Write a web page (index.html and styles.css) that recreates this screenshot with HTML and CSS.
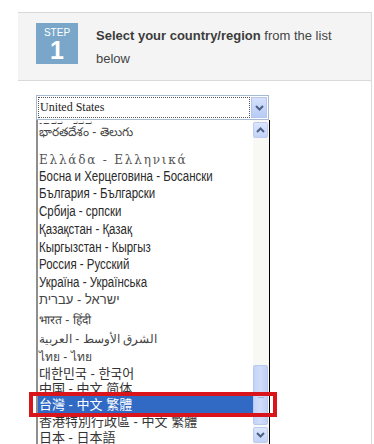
FILE: index.html
```html
<!DOCTYPE html>
<html>
<head>
<meta charset="utf-8">
<link rel="stylesheet" href="styles.css">
</head>
<body>
<div class="frame">
  <div class="header">
    <div class="badge"><span class="badge-step">STEP</span><span class="badge-num">1</span></div>
    <p class="title"><b>Select your country/region</b> from the list below</p>
  </div>
  <div class="content">
    <div class="select">
      <div class="select-value"><span>United States</span></div>
      <div class="select-btn">
        <svg width="9" height="6" viewBox="0 0 9 6"><path d="M1 1 L4.5 4.5 L8 1" fill="none" stroke="#4d6185" stroke-width="2"/></svg>
      </div>
    </div>
    <div class="list">
      <div class="items">
        <div class="row r-part"><span class="part">ಭಾರತ - ಕನ್ನಡ</span></div>
        <div class="row r-te small">భారతదేశం - తెలుగు</div>
        <div class="row r-el">Ελλάδα - Ελληνικά</div>
        <div class="row r16"><span class="cy">Босна и Херцеговина - Босански</span></div>
        <div class="row r17"><span class="cy">България - Български</span></div>
        <div class="row r19"><span class="cy">Србија - српски</span></div>
        <div class="row r18"><span class="cy">Қазақстан - Қазақ</span></div>
        <div class="row r17"><span class="cy">Кыргызстан - Кыргыз</span></div>
        <div class="row r18"><span class="cy">Россия - Русский</span></div>
        <div class="row r17"><span class="cy">Україна - Українська</span></div>
        <div class="row r19 rtl">ישראל - עברית</div>
        <div class="row r21 small">भारत - हिंदी</div>
        <div class="row r17 small">الشرق الأوسط - العربية</div>
        <div class="row r18 small">ไทย - ไทย</div>
        <div class="row r16 cjk">대한민국 - 한국어</div>
        <div class="row r15 cjk">中国 - 中文 简体</div>
        <div class="row r17 cjk selected">台灣 - 中文 繁體</div>
        <div class="row r16 cjk">香港特別行政區 - 中文 繁體</div>
        <div class="row r17 cjk">日本 - 日本語</div>
      </div>
      <div class="scrollbar">
        <div class="sb-btn">
          <svg width="9" height="6" viewBox="0 0 9 6"><path d="M1 5 L4.5 1.5 L8 5" fill="none" stroke="#4d6185" stroke-width="2"/></svg>
        </div>
        <div class="sb-track"></div>
        <div class="sb-thumb"><span class="grip"></span><span class="grip"></span><span class="grip"></span></div>
        <div class="sb-btn">
          <svg width="9" height="6" viewBox="0 0 9 6"><path d="M1 1 L4.5 4.5 L8 1" fill="none" stroke="#4d6185" stroke-width="2"/></svg>
        </div>
      </div>
    </div>
    <div class="highlight-box"></div>
  </div>
</div>
</body>
</html>
```

FILE: styles.css
```css
html, body {
  margin: 0;
  padding: 0;
  background: #ffffff;
  overflow: hidden;
  height: 444px;
}
.frame {
  margin: 12px 0 0 18px;
  width: 353px;
  height: 432px;
  border-top: 1px solid #d9d9d9;
  border-right: 1px solid #d9d9d9;
  font-family: "Liberation Sans", Arial, sans-serif;
}
.header {
  display: flex;
  align-items: flex-start;
  gap: 18px;
  height: 57px;
  padding: 10px 0 0 18px;
  background: #f4f4f4;
  border-bottom: 1px solid #d9d9d9;
}
.badge {
  width: 42px;
  height: 41px;
  background: #7aa7c9;
  color: #ffffff;
  display: flex;
  flex-direction: column;
  align-items: center;
  flex-shrink: 0;
}
.badge-step {
  font-size: 10px;
  line-height: 10px;
  margin-top: 5px;
}
.badge-num {
  font-size: 25px;
  font-weight: bold;
  line-height: 22px;
  margin-top: 1px;
}
.title {
  margin: 0;
  padding-top: 1px;
  width: 250px;
  font-size: 13px;
  line-height: 23px;
  color: #444444;
}
.title b {
  color: #3c3c3c;
}
.content {
  position: relative;
  padding: 14px 0 0 18px;
}
.select {
  width: 233px;
  height: 25px;
  box-sizing: border-box;
  border: 1px solid #a5b9d1;
  display: flex;
  background: #fff;
}
.select-value {
  flex: 1;
  margin: 1px;
  border: 1px dotted #555;
  font-family: "Liberation Serif", "Times New Roman", serif;
  font-size: 12px;
  color: #222;
  line-height: 19px;
  padding-left: 1px;
}
.select-btn {
  width: 16px;
  margin: 1px 1px 1px 0;
  background: linear-gradient(#d5e1fd, #b8cbf6);
  border: 1px solid #b4c6ee;
  box-sizing: border-box;
  display: flex;
  align-items: center;
  justify-content: center;
}
.list {
  width: 234px;
  height: 324px;
  box-sizing: border-box;
  border-left: 2px solid #8f8f8f;
  border-right: 1px solid #000;
  display: flex;
  overflow: hidden;
  background: #fff;
}
.items {
  flex: 1;
  overflow: hidden;
  font-family: "Liberation Sans", Arial, sans-serif;
  font-size: 14px;
  color: #2a2a2a;
}
.row {
  padding-left: 1px;
  white-space: nowrap;
  display: flex;
  align-items: center;
  box-sizing: border-box;
}
.r-part {
  height: 4px;
  overflow: hidden;
  align-items: flex-end;
  font-size: 11px;
  color: #444;
}
.part {
  line-height: 11px;
  margin-bottom: -6px;
}
.cy {
  display: inline-block;
  transform: scaleX(0.82);
  transform-origin: left center;
}
.r-te { height: 18px; }
.r-el {
  height: 26px;
  padding-top: 10px;
  letter-spacing: 1.8px;
  font-family: "DejaVu Serif", serif;
  font-size: 12px;
  color: #555;
}
.r15 { height: 15px; }
.r16 { height: 16px; }
.r17 { height: 17px; }
.r18 { height: 18px; }
.r19 { height: 19px; }
.r21 { height: 21px; }
.small { font-size: 12px; color: #444; }
.rtl { font-size: 13px; color: #444; }
.cjk {
  font-family: "Liberation Sans", "Noto Sans CJK TC", "Noto Sans CJK SC", "Noto Sans CJK KR", sans-serif;
  font-size: 13px;
  color: #333;
  line-height: 15px;
}
.selected {
  background: #316ac5;
  color: #ffffff;
}
.scrollbar {
  width: 16px;
  display: flex;
  flex-direction: column;
  background: #f8f8f5;
  padding: 2px 1px 0 0;
  box-sizing: border-box;
}
.sb-btn {
  height: 16px;
  flex-shrink: 0;
  background: linear-gradient(#dbe5fd, #c3d3f8);
  border: 1px solid #bccbee;
  border-radius: 2px;
  box-sizing: border-box;
  display: flex;
  align-items: center;
  justify-content: center;
}
.sb-track {
  height: 227px;
  flex-shrink: 0;
}
.sb-thumb {
  height: 60px;
  flex-shrink: 0;
  background: linear-gradient(90deg, #c5d4f8, #d0dcfa 50%, #bfcff5);
  border: 1px solid #b8c9ef;
  border-radius: 2px;
  box-sizing: border-box;
  margin-bottom: 2px;
  display: flex;
  flex-direction: column;
  align-items: center;
  justify-content: center;
  gap: 1px;
}
.grip {
  width: 6px;
  height: 1px;
  background: #9fb2df;
}
.highlight-box {
  position: absolute;
  left: 11px;
  top: 311px;
  width: 248px;
  height: 25px;
  box-sizing: border-box;
  border: 4px solid #d9141b;
}
```
